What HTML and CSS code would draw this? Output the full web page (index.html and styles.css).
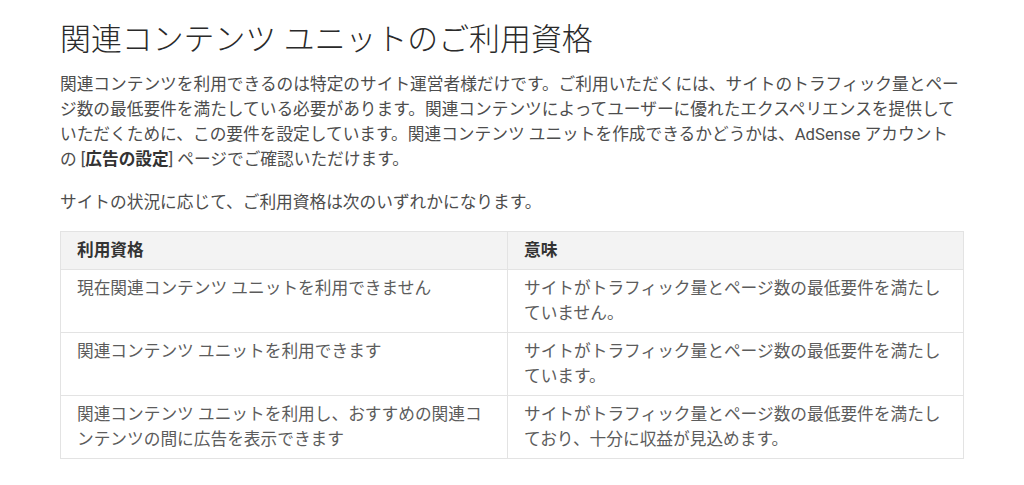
FILE: index.html
```html
<!DOCTYPE html>
<html lang="ja">
<head>
<meta charset="utf-8">
<link rel="stylesheet" href="styles.css">
</head>
<body>
<main class="article">
  <h1 class="title">関連コンテンツ ユニットのご利用資格</h1>
  <p class="text">関連コンテンツを利用できるのは特定のサイト運営者様だけです。ご利用いただくには、サイトのトラフィック量とページ数の最低要件を満たしている必要があります。関連コンテンツによってユーザーに優れたエクスペリエンスを提供していただくために、この要件を設定しています。関連コンテンツ ユニットを作成できるかどうかは、AdSense アカウントの [<strong>広告の設定</strong>] ページでご確認いただけます。</p>
  <p class="text">サイトの状況に応じて、ご利用資格は次のいずれかになります。</p>
  <table class="table">
    <thead>
      <tr><th class="col1">利用資格</th><th>意味</th></tr>
    </thead>
    <tbody>
      <tr><td>現在関連コンテンツ ユニットを利用できません</td><td>サイトがトラフィック量とページ数の最低要件を満たしていません。</td></tr>
      <tr><td>関連コンテンツ ユニットを利用できます</td><td>サイトがトラフィック量とページ数の最低要件を満たしています。</td></tr>
      <tr><td>関連コンテンツ ユニットを利用し、おすすめの関連コンテンツの間に広告を表示できます</td><td>サイトがトラフィック量とページ数の最低要件を満たしており、十分に収益が見込めます。</td></tr>
    </tbody>
  </table>
</main>
</body>
</html>
```

FILE: styles.css
```css
html, body {
  margin: 0;
  padding: 0;
  background: #ffffff;
}
body {
  font-family: Roboto, "Noto Sans CJK JP", sans-serif;
  color: #4d4d4d;
}
.article {
  width: 904px;
  padding: 20px 0 0 60px;
}
.title {
  margin: 0;
  font-size: 30.9px;
  line-height: 40px;
  font-weight: 300;
  color: #2a2a2a;
}
.text {
  margin: 12px 0 18px;
  font-size: 16.7px;
  line-height: 25px;
}
.text + .text {
  margin: 0 0 16px;
}
.text strong {
  font-weight: 700;
  color: #333333;
}
.table {
  width: 904px;
  border-collapse: collapse;
  font-size: 16.7px;
  line-height: 25px;
  color: #5c5c5c;
  table-layout: fixed;
}
.table th, .table td {
  border: 1px solid #e3e3e3;
  padding: 6px 15px 6px 16px;
  text-align: left;
  vertical-align: top;
}
.table th {
  background: #f3f3f3;
  font-weight: 700;
  color: #333333;
}
.col1 {
  width: 415px;
}
```
